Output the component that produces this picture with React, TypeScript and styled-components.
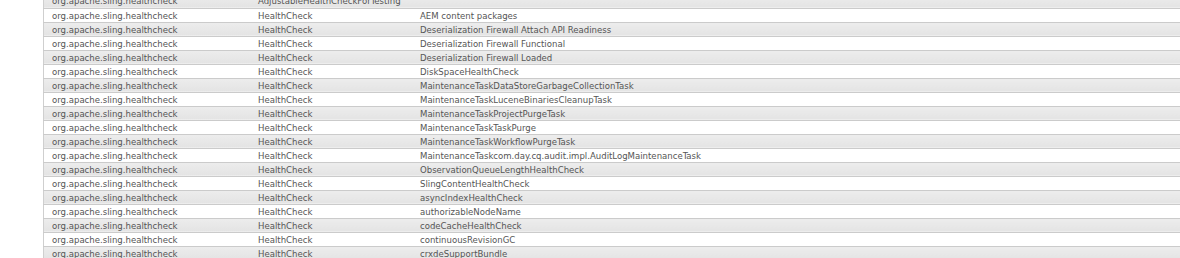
import React from "react";
import styled, { createGlobalStyle } from "styled-components";

const GlobalStyle = createGlobalStyle`
  html, body {
    margin: 0;
    padding: 0;
    background: #ffffff;
    overflow: hidden;
  }
`;

const Page = styled.div`
  padding-left: 43px;
  margin-top: -6px;
  width: 1180px;
  box-sizing: border-box;
`;

const Table = styled.table`
  width: 100%;
  border-collapse: collapse;
  table-layout: fixed;
  border-left: 1px solid #cfcfcf;
  font-family: "DejaVu Sans Condensed", "DejaVu Sans", sans-serif;
  font-stretch: condensed;
  font-size: 9.5px;
  color: #555555;
`;

const Row = styled.tr<{ $striped: boolean }>`
  height: 14px;
  background: ${(p) =>
    p.$striped ? "linear-gradient(#ededed, #e4e4e4)" : "#ffffff"};
  border-bottom: 1px solid #cbcbcb;
`;

const Cell = styled.td<{ $width?: number }>`
  padding: 0 0 0 8px;
  height: 13px;
  line-height: 13px;
  white-space: nowrap;
  overflow: hidden;
  vertical-align: middle;
  ${(p) => (p.$width ? `width: ${p.$width}px;` : "")}
`;

const names = [
  "AdjustableHealthCheckForTesting",
  "AEM content packages",
  "Deserialization Firewall Attach API Readiness",
  "Deserialization Firewall Functional",
  "Deserialization Firewall Loaded",
  "DiskSpaceHealthCheck",
  "MaintenanceTaskDataStoreGarbageCollectionTask",
  "MaintenanceTaskLuceneBinariesCleanupTask",
  "MaintenanceTaskProjectPurgeTask",
  "MaintenanceTaskTaskPurge",
  "MaintenanceTaskWorkflowPurgeTask",
  "MaintenanceTaskcom.day.cq.audit.impl.AuditLogMaintenanceTask",
  "ObservationQueueLengthHealthCheck",
  "SlingContentHealthCheck",
  "asyncIndexHealthCheck",
  "authorizableNodeName",
  "codeCacheHealthCheck",
  "continuousRevisionGC",
  "crxdeSupportBundle",
];

const rows = names.map((name, i) => ({
  pkg: "org.apache.sling.healthcheck",
  type: i === 0 ? "AdjustableHealthCheckForTesting" : "HealthCheck",
  name: i === 0 ? "" : name,
}));

export default function App() {
  return (
    <>
      <GlobalStyle />
      <Page>
        <Table>
          <tbody>
            {rows.map((r, i) => (
              <Row key={i} $striped={i % 2 === 0}>
                <Cell $width={198}>{r.pkg}</Cell>
                <Cell $width={154}>{r.type}</Cell>
                <Cell>{r.name}</Cell>
              </Row>
            ))}
          </tbody>
        </Table>
      </Page>
    </>
  );
}
